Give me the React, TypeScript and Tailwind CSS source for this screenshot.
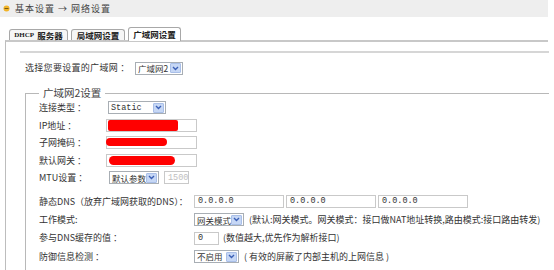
function Arrow() {
  return (
    <span className="w-[11px] h-[10px] bg-[#c6d7f5] border border-[#a9bfe8] rounded-[1px] flex items-center justify-center shrink-0">
      <svg width="7" height="5" viewBox="0 0 7 5">
        <path d="M1 1l2.5 2.5L6 1" stroke="#3a5fb5" strokeWidth="1.4" fill="none" />
      </svg>
    </span>
  )
}

function Select({ value, w, mono }: { value: string; w: string; mono?: boolean }) {
  return (
    <div className={`${w} h-[13px] border border-[#a8aeb4] bg-white flex items-center justify-between pl-[2px] pr-px overflow-hidden`}>
      <span className={mono ? "font-['Liberation_Mono',monospace] text-[8.5px] leading-none whitespace-nowrap" : 'text-[8.5px] leading-none whitespace-nowrap'}>{value}</span>
      <Arrow />
    </div>
  )
}

function Input({ w, value, dim, red }: { w: string; value?: string; dim?: boolean; red?: React.ReactNode }) {
  return (
    <div className={`${w} h-[13px] border border-[#c9c9c9] bg-white relative flex items-center pl-[3px] font-['Liberation_Mono',monospace] text-[8.5px] leading-none ${dim ? 'text-[#c0c0c0]' : 'text-[#333]'}`}>
      {value}
      {red}
    </div>
  )
}

function Row1({ label, children }: { label: string; children: React.ReactNode }) {
  return (
    <div className="h-[17.5px] flex items-center">
      <div className="w-[67px] shrink-0 whitespace-nowrap">{label}</div>
      {children}
    </div>
  )
}

function Row2({ label, children }: { label: string; children: React.ReactNode }) {
  return (
    <div className="h-[18.3px] flex items-center">
      <div className="w-[155px] shrink-0 whitespace-nowrap">{label}</div>
      {children}
    </div>
  )
}

export default function App() {
  return (
    <div className="w-[554px] h-[270px] overflow-hidden bg-white text-[#333] text-[9px] font-['Noto_Sans_CJK_SC','Noto_Sans',sans-serif]">
      <div className="w-[548px] h-[17px] bg-[#eeeeee] flex items-center pl-[3px] gap-[5px]">
        <svg width="7" height="7" viewBox="0 0 7 7">
          <circle cx="3.5" cy="3.5" r="3" fill="#f2b428" />
          <path d="M1.5 3.5h4" stroke="#7a5a10" strokeWidth="1" />
        </svg>
        <span className="text-[#444] tracking-[1px] whitespace-pre">基本设置 → 网络设置</span>
      </div>

      <div className="pl-[5px] pt-[10px]">
        <div className="flex items-end gap-[3px] pl-[4px] h-[13px] relative z-10 font-bold text-[8.5px] text-[#222]">
          <div className="w-[59px] h-[11px] border border-b-0 border-[#a8a8a8] rounded-t-[3px] bg-[#f6f6f6] flex items-center justify-center">
            <span className="font-['Liberation_Serif',serif] text-[7px] mr-[3px]">DHCP</span>服务器
          </div>
          <div className="w-[54px] h-[11px] border border-b-0 border-[#a8a8a8] rounded-t-[3px] bg-[#f6f6f6] flex items-center justify-center">
            局域网设置
          </div>
          <div className="w-[53px] h-[14px] -mb-px border border-b-0 border-[#a8a8a8] rounded-t-[3px] bg-white flex items-center justify-center">
            广域网设置
          </div>
        </div>

        <div className="w-[543px] h-[240px] border-t-2 border-l border-t-[#c8c8c8] border-l-[#bdbdbd] pl-[14px] pt-[9px]">
          <div className="w-[529px] border-t-2 border-[#d6d6d6]" />

          <div className="pl-[5px] mt-[8px] h-[14px] flex items-center">
            <span className="w-[110px] whitespace-nowrap tracking-[0.3px]">选择您要设置的广域网 ：</span>
            <Select value="广域网2" w="w-[48px]" />
          </div>

          <fieldset className="mt-[12px] ml-[5px] w-[524px] border-t border-l border-[#b8b8b8] pl-[13px]">
            <legend className="px-[4px] text-[10.5px] leading-[12px] text-[#444]">广域网2设置</legend>

            <Row1 label="连接类型 ：">
              <div className="ml-[2px]">
                <Select value="Static" w="w-[58px]" mono />
              </div>
            </Row1>
            <Row1 label="IP地址 ：">
              <Input w="w-[91px]" red={<div className="absolute left-px top-0 w-[70px] h-[11px] bg-[#ff0000] rounded-[2px]" />} />
            </Row1>
            <Row1 label="子网掩码 ：">
              <Input w="w-[91px]" red={<div className="absolute -left-[1px] top-[1px] w-[61px] h-[8px] bg-[#ff0000] rounded-full" />} />
            </Row1>
            <Row1 label="默认网关 ：">
              <Input w="w-[91px]" red={<div className="absolute left-[2px] top-[1px] w-[66px] h-[9px] bg-[#ff0000] rounded-full" />} />
            </Row1>
            <Row1 label="MTU设置 ：">
              <div className="ml-[3px] flex items-center gap-[5px]">
                <Select value="默认参数" w="w-[50px]" />
                <Input w="w-[25px]" value="1500" dim />
              </div>
            </Row1>

            <div className="h-[6px]" />

            <Row2 label="静态DNS（放弃广域网获取的DNS）：">
              <div className="flex gap-[2px]">
                <Input w="w-[90px]" value="0.0.0.0" />
                <Input w="w-[90px]" value="0.0.0.0" />
                <Input w="w-[90px]" value="0.0.0.0" />
              </div>
            </Row2>
            <Row2 label="工作模式:">
              <Select value="网关模式" w="w-[50px]" />
              <span className="ml-[5px] whitespace-nowrap">(默认:网关模式。网关模式：接口做NAT地址转换,路由模式:接口路由转发)</span>
            </Row2>
            <Row2 label="参与DNS缓存的值 ：">
              <Input w="w-[25px]" value="0" />
              <span className="ml-[4px] whitespace-nowrap">(数值越大,优先作为解析接口)</span>
            </Row2>
            <Row2 label="防御信息检测 ：">
              <Select value="不启用" w="w-[45px]" />
              <span className="ml-[5px] whitespace-nowrap">( 有效的屏蔽了内部主机的上网信息 )</span>
            </Row2>
            <div className="h-[20px]" />
          </fieldset>
        </div>
      </div>
    </div>
  )
}
